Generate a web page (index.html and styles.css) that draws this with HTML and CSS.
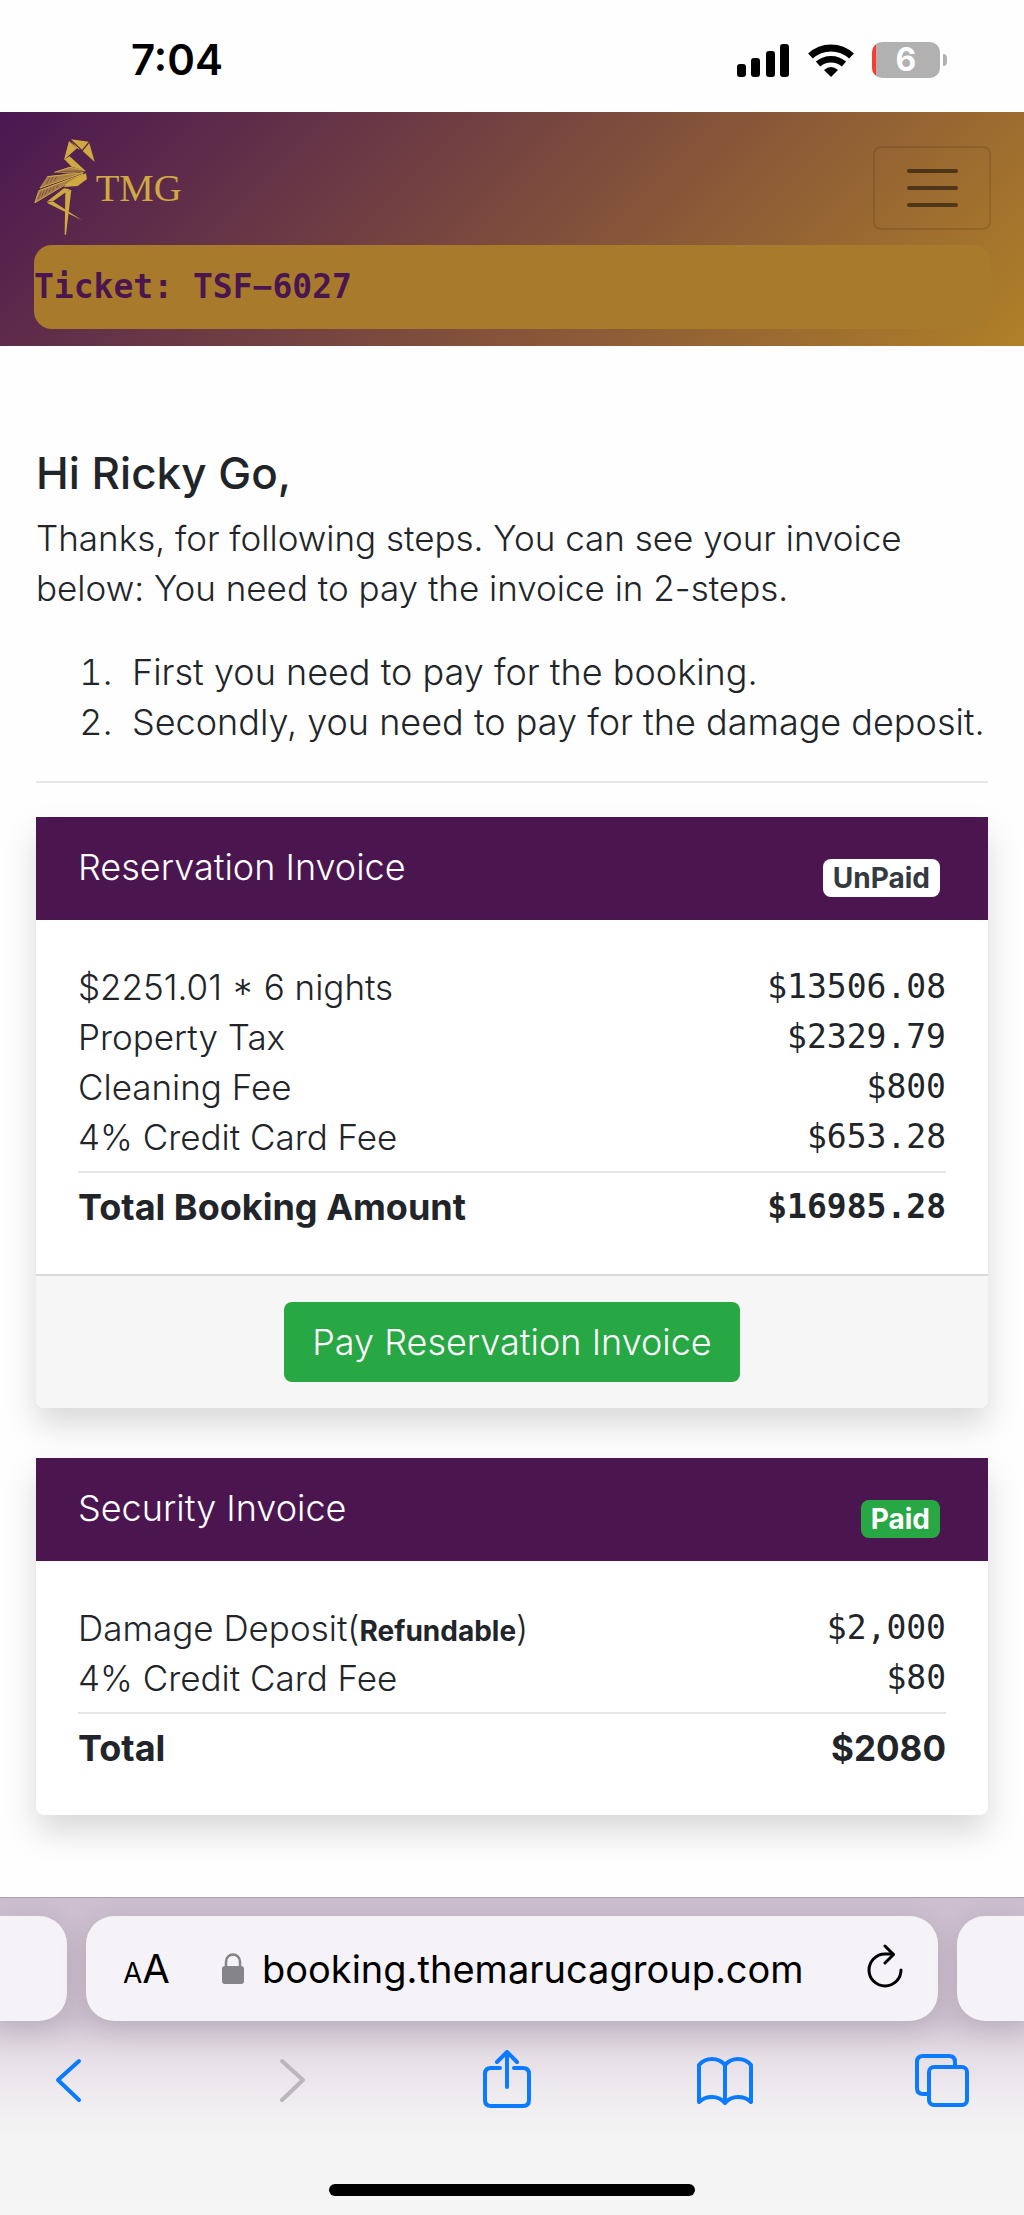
FILE: index.html
```html
<!DOCTYPE html>
<html lang="en">
<head>
    <meta charset="UTF-8">
    <meta name="viewport" content="width=device-width, initial-scale=1.0">
    <title>TMG Booking Invoice</title>
    <link rel="stylesheet" href="styles.css">
</head>
<body>
    <div class="status-bar">
        <span class="time">7:04</span>
        <div class="status-icons">
            <svg class="signal" width="53" height="34" viewBox="0 0 53 34">
                <rect x="0" y="21" width="9" height="13" rx="3"/>
                <rect x="14" y="15" width="9" height="19" rx="3"/>
                <rect x="29" y="8" width="9" height="26" rx="3"/>
                <rect x="43" y="1" width="9" height="33" rx="3"/>
            </svg>
            <svg class="wifi" width="46" height="34" viewBox="0 0 46 34">
                <path d="M2.500 13 A 30 30 0 0 1 43.500 13" fill="none" stroke="#000" stroke-width="7"/>
                <path d="M10 21 A 20 20 0 0 1 36 21" fill="none" stroke="#000" stroke-width="6.500"/>
                <path d="M23 34 L16 27 Q23 21 30 27 Z"/>
            </svg>
            <div class="battery">
                <span class="battery-body">6</span>
                <span class="battery-tip"></span>
            </div>
        </div>
    </div>

    <nav class="navbar">
        <div class="nav-top">
            <a href="#" class="logo" aria-label="TMG">
                <svg width="150" height="98" viewBox="42 39 450 294">
                    <g fill="#cfaa42">
                        <polygon points="147,48 132,104 171,70"/>
                        <polygon points="153,43 206,50 186,74"/>
                        <polygon points="153,48 181,74 170,70"/>
                        <polygon points="208,54 224,111 188,78"/>
                        <polygon points="149,94 133,103 155,125 196,137"/>
                        <polygon points="198,145 201,162 173,183 132,186 148,166"/>
                        <polygon points="132,190 80,230 100,228 150,193"/>
                        <polygon points="80,233 98,229 186,286"/>
                        <polygon points="136,198 154,194 138,329 134,329"/>
                    </g>
                    <g fill="#a87f48">
                        <polygon points="103,142 150,125 198,138 150,146"/>
                        <polygon points="82,154 192,143 58,190"/>
                        <polygon points="56,196 190,147 120,187 43,235"/>
                    </g>
                    <g fill="none" stroke="#cfaa42" stroke-width="3">
                        <path d="M103 142L150 127L196 137M82 155L190 143L60 189M57 197L188 148L45 233Z"/>
                    </g>
                    <g fill="none" stroke="#55204e" stroke-width="1.500">
                        <path d="M90 157L78 178M100 156L90 172M110 155L103 167M64 200L55 222M73 196L65 215M83 192L75 209M93 188L86 202M104 184L97 196M115 179L109 189M120 140L185 138"/>
                    </g>
                    <text x="227" y="227" class="logo-text">TMG</text>
                </svg>
            </a>
            <button class="toggler" type="button" aria-label="Toggle navigation">
                <span></span>
                <span></span>
                <span></span>
            </button>
        </div>
        <div class="ticket">Ticket: TSF−6027</div>
    </nav>

    <main class="content">
        <h1>Hi Ricky Go,</h1>
        <p>Thanks, for following steps. You can see your invoice below: You need to pay the invoice in 2-steps.</p>
        <ol>
            <li>First you need to pay for the booking.</li>
            <li>Secondly, you need to pay for the damage deposit.</li>
        </ol>
        <hr>

        <!-- Reservation -->
        <section class="card">
            <div class="card-header">
                <h2>Reservation Invoice</h2>
                <span class="badge badge-light">UnPaid</span>
            </div>
            <div class="card-body">
                <table>
                    <tbody>
                        <tr><td>$2251.01 * 6 nights</td><td class="amount">$13506.08</td></tr>
                        <tr><td>Property Tax</td><td class="amount">$2329.79</td></tr>
                        <tr><td>Cleaning Fee</td><td class="amount">$800</td></tr>
                        <tr><td>4% Credit Card Fee</td><td class="amount">$653.28</td></tr>
                    </tbody>
                    <tfoot>
                        <tr><td>Total Booking Amount</td><td class="amount">$16985.28</td></tr>
                    </tfoot>
                </table>
            </div>
            <div class="card-footer">
                <button class="btn-pay" type="button">Pay Reservation Invoice</button>
            </div>
        </section>

        <!-- Security deposit -->
        <section class="card">
            <div class="card-header">
                <h2>Security Invoice</h2>
                <span class="badge badge-success">Paid</span>
            </div>
            <div class="card-body">
                <table>
                    <tbody>
                        <tr><td>Damage Deposit(<b class="small">Refundable</b>)</td><td class="amount">$2,000</td></tr>
                        <tr><td>4% Credit Card Fee</td><td class="amount">$80</td></tr>
                    </tbody>
                    <tfoot>
                        <tr><td>Total</td><td class="total">$2080</td></tr>
                    </tfoot>
                </table>
            </div>
        </section>
    </main>

    <footer class="browser-bar">
        <div class="tabs">
            <div class="tab tab-prev"></div>
            <div class="tab address">
                <button class="text-size" type="button" aria-label="Text size"><small>A</small>A</button>
                <div class="url">
                    <svg width="22" height="32" viewBox="0 0 22 32">
                        <rect x="0" y="13" width="22" height="18" rx="3" fill="#858488"/>
                        <path d="M4 14V8.500a7 7 0 0 1 14 0V14" fill="none" stroke="#858488" stroke-width="2.500"/>
                    </svg>
                    <span>booking.themarucagroup.com</span>
                </div>
                <button class="reload" type="button" aria-label="Reload">
                    <svg width="36" height="44" viewBox="0 0 36 44" fill="none" stroke="#000" stroke-width="3" stroke-linecap="round" stroke-linejoin="round">
                        <path d="M34 26A16 16 0 1 1 18 10H26"/>
                        <path d="M18 2L26.500 10.500L18 19"/>
                    </svg>
                </button>
            </div>
            <div class="tab tab-next"></div>
        </div>
        <div class="toolbar">
            <button type="button" aria-label="Back">
                <svg viewBox="0 0 60 60"><path d="M41 11L20 30L41 50"/></svg>
            </button>
            <button type="button" aria-label="Forward" disabled>
                <svg viewBox="0 0 60 60"><path d="M25 11L46 30L25 50"/></svg>
            </button>
            <button type="button" aria-label="Share">
                <svg viewBox="0 0 60 60"><path d="M24 18H15Q9 18 9 24V50Q9 56 15 56H47Q53 56 53 50V24Q53 18 47 18H38M31 37V3M21 12L31 2L41 12"/></svg>
            </button>
            <button type="button" aria-label="Bookmarks">
                <svg viewBox="0 0 60 60"><path d="M31 15Q26 9 18 9Q10 9 5 15V52Q10 47 18 47Q26 47 31 53Q36 47 44 47Q52 47 57 52V15Q52 9 44 9Q36 9 31 15V53"/></svg>
            </button>
            <button type="button" aria-label="Tabs">
                <svg viewBox="0 0 60 60"><path d="M16 44H10Q4 44 4 38V12Q4 6 10 6H36Q42 6 42 12V17"/><rect x="16" y="17" width="38" height="38" rx="5"/></svg>
            </button>
        </div>
        <div class="home-indicator"></div>
    </footer>
</body>
</html>
```

FILE: styles.css
```css
* {
    box-sizing: border-box;
}
body {
    margin: 0;
    background-color: #fefefe;
    color: #212529;
    font-family: Inter, "Open Sans", sans-serif;
    font-size: 35px;
    font-weight: 300;
    line-height: 50px;
}
button {
    font-family: inherit;
    background: none;
    border: 0;
    padding: 0;
    cursor: pointer;
}
svg {
    display: block;
}

/* Status bar */
.status-bar {
    display: flex;
    justify-content: space-between;
    align-items: center;
    height: 112px;
    padding: 8px 77px 0 131px;
    color: #000;
}
.time {
    font-size: 42px;
    font-weight: 600;
}
.status-icons {
    display: flex;
    align-items: center;
    gap: 18px;
}
.battery {
    display: flex;
    align-items: center;
    gap: 3px;
}
.battery-body {
    width: 68px;
    height: 36px;
    border-radius: 10px;
    background: linear-gradient(to right, #fb3b30 4px, #b1b1b1 4px);
    color: #fff;
    font-size: 32px;
    font-weight: 700;
    line-height: 36px;
    text-align: center;
}
.battery-tip {
    width: 4px;
    height: 12px;
    border-radius: 0 6px 6px 0;
    background-color: #b1b1b1;
}

/* Navbar */
.navbar {
    padding: 26px 33px 17px 34px;
    background: linear-gradient(135deg, #4a1752, #b08028);
}
.nav-top {
    display: flex;
    justify-content: space-between;
    align-items: flex-start;
    margin-bottom: 9px;
}
.logo-text {
    font-family: "Liberation Serif", serif;
    font-size: 116px;
    font-weight: 400;
    fill: #cfaa42;
}
.toggler {
    display: flex;
    flex-direction: column;
    justify-content: center;
    align-items: center;
    gap: 13px;
    width: 118px;
    height: 84px;
    margin-top: 8px;
    border: 2px solid rgba(0, 0, 0, 0.1);
    border-radius: 8px;
}
.toggler span {
    width: 51px;
    height: 4px;
    border-radius: 2px;
    background-color: rgba(0, 0, 0, 0.5);
}
.ticket {
    height: 84px;
    border-radius: 18px;
    background-color: #a87b2c;
    color: #4b1650;
    font-family: "DejaVu Sans Mono", monospace;
    font-size: 33px;
    font-weight: 700;
    line-height: 84px;
}

/* Content */
.content {
    padding: 102px 36px 82px;
}
h1 {
    margin: 0 0 15px;
    font-size: 44px;
    font-weight: 500;
}
p {
    margin: 0 0 34px;
}
ol {
    margin: 0;
    padding-left: 86px;
    font-size: 36px;
}
li {
    padding-left: 10px;
}
hr {
    height: 2px;
    margin: 34px 0;
    border: 0;
    background-color: #e5e5e5;
}

/* Cards */
.card {
    border-radius: 0 0 8px 8px;
    background-color: #fff;
    box-shadow: 0 17px 33px rgba(0, 0, 0, 0.15);
}
.card + .card {
    margin-top: 50px;
}
.card-header {
    display: flex;
    justify-content: space-between;
    align-items: flex-start;
    padding: 25px 48px 23px 42px;
    background-color: #4b1650;
    color: #fff;
}
h2 {
    margin: 0;
    font-size: 36px;
    font-weight: 300;
}
.badge {
    margin-top: 17px;
    padding: 6px 10px;
    border-radius: 8px;
    font-size: 28px;
    font-weight: 700;
    line-height: 26px;
}
.badge-light {
    background-color: #fff;
    color: #343a40;
}
.badge-success {
    background-color: #28a745;
    color: #fff;
}
.card-body {
    padding: 42px;
}
table {
    width: 100%;
    border-collapse: collapse;
}
td {
    height: 50px;
    padding: 0;
}
td:last-child {
    text-align: right;
}
tbody tr:last-child td {
    padding-bottom: 9px;
}
tfoot td {
    padding-top: 9px;
    border-top: 2px solid #e5e5e5;
    font-size: 36px;
    font-weight: 700;
}
.amount {
    font-family: "DejaVu Sans Mono", monospace;
    font-size: 33px;
}
.total {
    font-size: 35px;
}
.small {
    font-size: 28px;
    font-weight: 700;
    line-height: 28px;
}
.card-footer {
    padding: 26px 42px;
    border-top: 2px solid #d8d8d8;
    border-radius: 0 0 8px 8px;
    background-color: #f6f6f6;
    text-align: center;
}
.btn-pay {
    display: block;
    margin: 0 auto;
    padding: 15px 28px;
    border-radius: 8px;
    background-color: #28a745;
    color: #fff;
    font-size: 36px;
    font-weight: 300;
    line-height: 50px;
}

/* Browser bar */
.browser-bar {
    overflow: hidden;
    padding-bottom: 19px;
    border-top: 1px solid #a9a0ad;
    background: linear-gradient(#cdbfd0, #cfc2d2 120px, #e6dfe6 160px, #efecf0 200px, #f4f4f4 240px, #f5f5f5);
}
.tabs {
    display: grid;
    grid-template-columns: 67px 1fr 67px;
    gap: 19px;
    padding-top: 18px;
}
.tab {
    height: 105px;
    border-radius: 28px;
    background-color: #f5f3f7;
    box-shadow: 0 6px 30px rgba(0, 0, 0, 0.12);
}
.tab-prev {
    border-radius: 0 28px 28px 0;
}
.tab-next {
    border-radius: 28px 0 0 28px;
}
.address {
    display: flex;
    align-items: center;
    padding: 0 35px 0 37px;
    color: #000;
}
.text-size {
    font-size: 40px;
    font-weight: 400;
}
.text-size small {
    font-size: 28px;
}
.url {
    display: flex;
    align-items: center;
    gap: 18px;
    margin: 0 auto 0 52px;
    font-size: 38px;
    font-weight: 400;
}
.reload {
    padding-bottom: 6px;
}
.toolbar {
    display: flex;
    justify-content: space-between;
    padding: 29px 51px 0 38px;
}
.toolbar svg {
    width: 60px;
    height: 60px;
    fill: none;
    stroke: #0a7aff;
    stroke-width: 4;
    stroke-linecap: round;
    stroke-linejoin: round;
}
.toolbar button:disabled svg {
    stroke: #bab7bc;
}
.home-indicator {
    width: 366px;
    height: 12px;
    margin: 74px auto 0;
    border-radius: 6px;
    background-color: #000;
}
```
